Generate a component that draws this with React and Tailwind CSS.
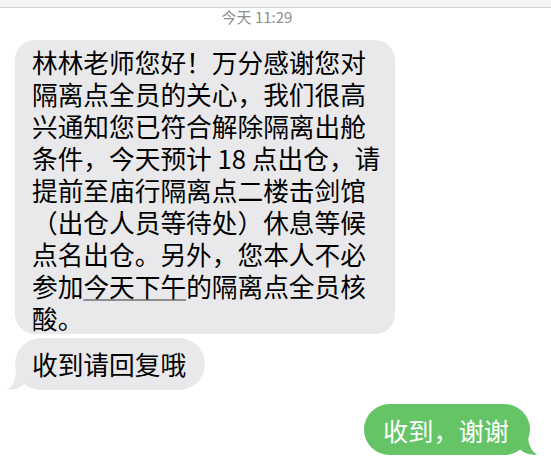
import React from "react";

const lines = [
  "林林老师您好！万分感谢您对",
  "隔离点全员的关心，我们很高",
  "兴通知您已符合解除隔离出舱",
  "条件，今天预计 18 点出仓，请",
  "提前至庙行隔离点二楼击剑馆",
  "（出仓人员等待处）休息等候",
  "点名出仓。另外，您本人不必",
  null,
  "酸。",
];

const Tail = ({ fill, flip }) => (
  <svg
    className={`absolute bottom-0 w-[20px] h-[20px] ${
      flip ? "right-[-7px] scale-x-[-1]" : "left-[-8px]"
    }`}
    viewBox="0 0 20 20"
  >
    <path
      d="M9 0 C9 9 6 16 0 19.5 C6 20.3 11 18.6 15 16 L20 12 L20 0 Z"
      fill={fill}
    />
  </svg>
);

export default function App() {
  return (
    <div
      className="w-[551px] h-[467px] bg-white overflow-hidden flex flex-col"
      style={{ fontFamily: '"Noto Sans CJK SC", "Noto Sans", sans-serif' }}
    >
      <div className="h-[8px] bg-[#f5f5f5] border-b border-[#d4d4d4]" />
      <div className="flex justify-center pr-[37px] text-[15px] leading-[17px] text-[#8e8e93]">
        今天 11:29
      </div>

      <div className="mt-[15px] ml-[15px] w-[380px] bg-[#e9e9eb] rounded-[20px] pl-[17px] pt-[6px] text-[25.7px] leading-[32px] text-black">
        {lines.map((l, i) =>
          l === null ? (
            <div key={i} className="whitespace-nowrap">
              参加
              <span className="underline decoration-[#8e8e8e] underline-offset-[2px]">
                今天下午
              </span>
              的隔离点全员核
            </div>
          ) : (
            <div key={i} className="whitespace-nowrap">
              {l}
            </div>
          )
        )}
      </div>

      <div className="relative mt-[4px] ml-[15px] self-start h-[52px] flex items-center bg-[#e9e9eb] rounded-[26px] pl-[17px] pr-[19px] text-[25.7px] leading-[32px] text-black">
        收到请回复哦
        <Tail fill="#e9e9eb" />
      </div>

      <div className="relative mt-[14px] mr-[21px] self-end h-[51px] flex items-center bg-[#65c466] rounded-[26px] pl-[19px] pr-[21px] text-[25.2px] leading-[32px] text-white">
        收到，谢谢
        <Tail fill="#65c466" flip />
      </div>
    </div>
  );
}
